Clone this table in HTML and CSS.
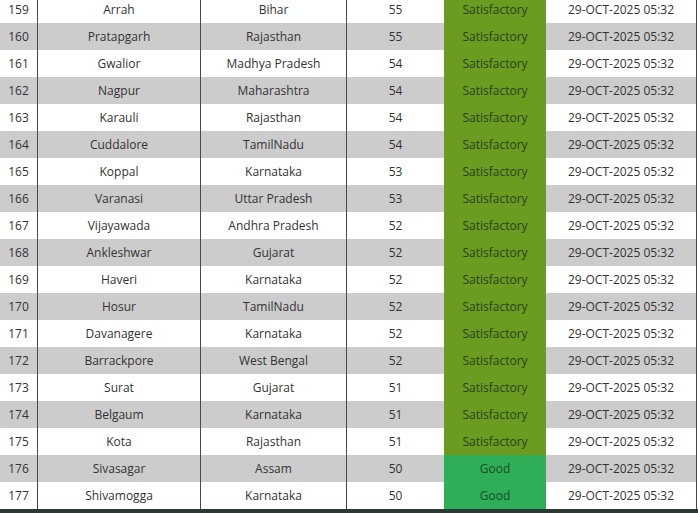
FILE: index.html
```html
<!DOCTYPE html>
<html>
<head>
<meta charset="utf-8">
<link rel="stylesheet" href="styles.css">
</head>
<body>
<div class="table">
  <div class="row"><div class="c n">159</div><div class="c">Arrah</div><div class="c">Bihar</div><div class="c">55</div><div class="c sat">Satisfactory</div><div class="c d">29-OCT-2025 05:32</div></div>
  <div class="row alt"><div class="c n">160</div><div class="c">Pratapgarh</div><div class="c">Rajasthan</div><div class="c">55</div><div class="c sat">Satisfactory</div><div class="c d">29-OCT-2025 05:32</div></div>
  <div class="row"><div class="c n">161</div><div class="c">Gwalior</div><div class="c">Madhya Pradesh</div><div class="c">54</div><div class="c sat">Satisfactory</div><div class="c d">29-OCT-2025 05:32</div></div>
  <div class="row alt"><div class="c n">162</div><div class="c">Nagpur</div><div class="c">Maharashtra</div><div class="c">54</div><div class="c sat">Satisfactory</div><div class="c d">29-OCT-2025 05:32</div></div>
  <div class="row"><div class="c n">163</div><div class="c">Karauli</div><div class="c">Rajasthan</div><div class="c">54</div><div class="c sat">Satisfactory</div><div class="c d">29-OCT-2025 05:32</div></div>
  <div class="row alt"><div class="c n">164</div><div class="c">Cuddalore</div><div class="c">TamilNadu</div><div class="c">54</div><div class="c sat">Satisfactory</div><div class="c d">29-OCT-2025 05:32</div></div>
  <div class="row"><div class="c n">165</div><div class="c">Koppal</div><div class="c">Karnataka</div><div class="c">53</div><div class="c sat">Satisfactory</div><div class="c d">29-OCT-2025 05:32</div></div>
  <div class="row alt"><div class="c n">166</div><div class="c">Varanasi</div><div class="c">Uttar Pradesh</div><div class="c">53</div><div class="c sat">Satisfactory</div><div class="c d">29-OCT-2025 05:32</div></div>
  <div class="row"><div class="c n">167</div><div class="c">Vijayawada</div><div class="c">Andhra Pradesh</div><div class="c">52</div><div class="c sat">Satisfactory</div><div class="c d">29-OCT-2025 05:32</div></div>
  <div class="row alt"><div class="c n">168</div><div class="c">Ankleshwar</div><div class="c">Gujarat</div><div class="c">52</div><div class="c sat">Satisfactory</div><div class="c d">29-OCT-2025 05:32</div></div>
  <div class="row"><div class="c n">169</div><div class="c">Haveri</div><div class="c">Karnataka</div><div class="c">52</div><div class="c sat">Satisfactory</div><div class="c d">29-OCT-2025 05:32</div></div>
  <div class="row alt"><div class="c n">170</div><div class="c">Hosur</div><div class="c">TamilNadu</div><div class="c">52</div><div class="c sat">Satisfactory</div><div class="c d">29-OCT-2025 05:32</div></div>
  <div class="row"><div class="c n">171</div><div class="c">Davanagere</div><div class="c">Karnataka</div><div class="c">52</div><div class="c sat">Satisfactory</div><div class="c d">29-OCT-2025 05:32</div></div>
  <div class="row alt"><div class="c n">172</div><div class="c">Barrackpore</div><div class="c">West Bengal</div><div class="c">52</div><div class="c sat">Satisfactory</div><div class="c d">29-OCT-2025 05:32</div></div>
  <div class="row"><div class="c n">173</div><div class="c">Surat</div><div class="c">Gujarat</div><div class="c">51</div><div class="c sat">Satisfactory</div><div class="c d">29-OCT-2025 05:32</div></div>
  <div class="row alt"><div class="c n">174</div><div class="c">Belgaum</div><div class="c">Karnataka</div><div class="c">51</div><div class="c sat">Satisfactory</div><div class="c d">29-OCT-2025 05:32</div></div>
  <div class="row"><div class="c n">175</div><div class="c">Kota</div><div class="c">Rajasthan</div><div class="c">51</div><div class="c sat">Satisfactory</div><div class="c d">29-OCT-2025 05:32</div></div>
  <div class="row alt"><div class="c n">176</div><div class="c">Sivasagar</div><div class="c">Assam</div><div class="c">50</div><div class="c good">Good</div><div class="c d">29-OCT-2025 05:32</div></div>
  <div class="row"><div class="c n">177</div><div class="c">Shivamogga</div><div class="c">Karnataka</div><div class="c">50</div><div class="c good">Good</div><div class="c d">29-OCT-2025 05:32</div></div>
</div>
<div class="footer"></div>
</body>
</html>
```
FILE: styles.css
```css
html, body {
  margin: 0;
  padding: 0;
  background: #ffffff;
  overflow: hidden;
}
body {
  font-family: "Open Sans", "Noto Sans", sans-serif;
  font-size: 12px;
  color: #333333;
}
.table {
  width: 697px;
  margin-top: -4px;
}
.row {
  display: grid;
  grid-template-columns: 38px 163px 146px 97px 102px 151px;
  height: 27px;
  background: #ffffff;
}
.row.alt {
  background: #cccccc;
}
.c {
  box-sizing: border-box;
  display: flex;
  align-items: center;
  justify-content: center;
  white-space: nowrap;
}
.c:nth-child(1), .c:nth-child(2), .c:nth-child(3), .c:nth-child(6) {
  border-right: 1px solid #4a4a4a;
}
.sat {
  background: #6b9b1f;
  color: #27421f;
}
.good {
  background: #2eaf57;
  color: #1c4a27;
}
.footer {
  height: 6px;
  background: #2b3933;
}
```
